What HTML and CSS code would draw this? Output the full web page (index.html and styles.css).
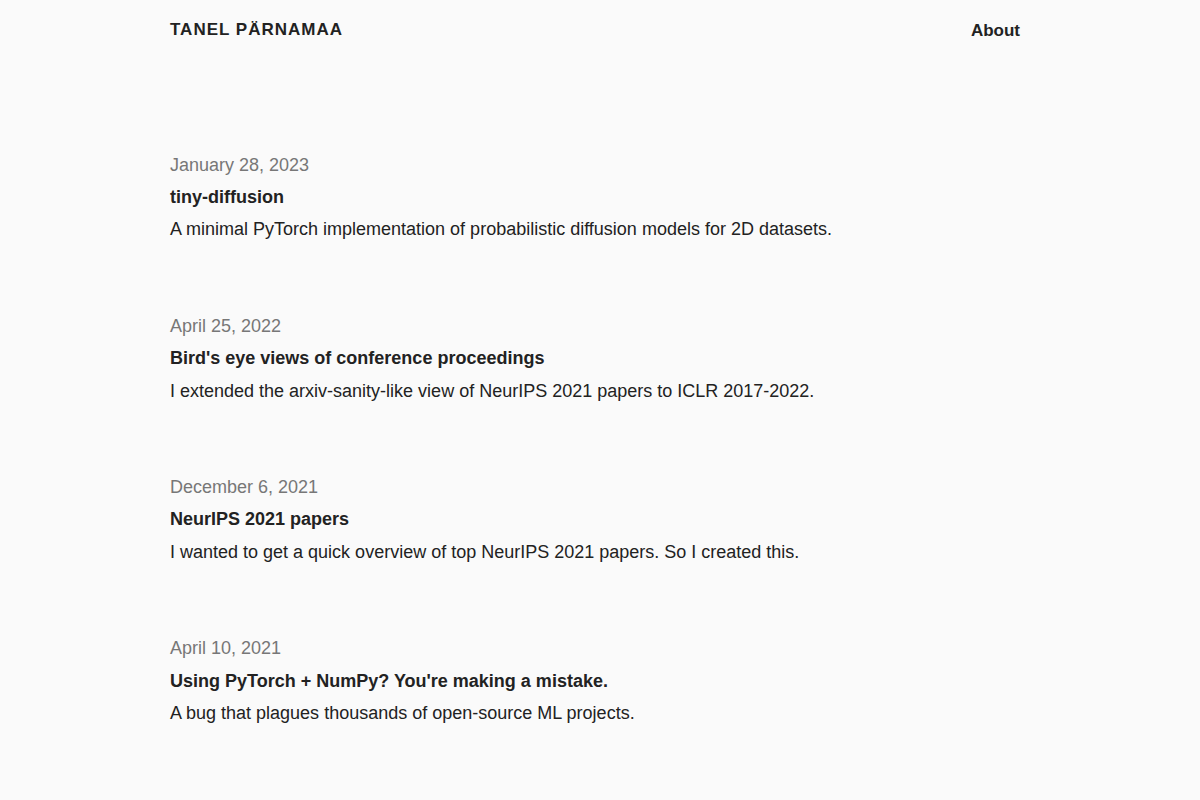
FILE: index.html
```html
<!DOCTYPE html>
<html lang="en">
<head>
  <meta charset="UTF-8">
  <meta name="viewport" content="width=device-width, initial-scale=1.0">
  <title>Tanel Pärnamaa</title>
  <link rel="stylesheet" href="styles.css">
</head>
<body>
  <div class="container">
    <header class="site-header">
      <a class="site-title" href="#">TANEL PÄRNAMAA</a>
      <nav class="site-nav">
        <a href="#">About</a>
      </nav>
    </header>

    <main class="post-list">
      <article class="post">
        <div class="post-date">January 28, 2023</div>
        <a class="post-title" href="#">tiny-diffusion</a>
        <p class="post-summary">A minimal PyTorch implementation of probabilistic diffusion models for 2D datasets.</p>
      </article>

      <article class="post">
        <div class="post-date">April 25, 2022</div>
        <a class="post-title" href="#">Bird's eye views of conference proceedings</a>
        <p class="post-summary">I extended the arxiv-sanity-like view of NeurIPS 2021 papers to ICLR 2017-2022.</p>
      </article>

      <article class="post">
        <div class="post-date">December 6, 2021</div>
        <a class="post-title" href="#">NeurIPS 2021 papers</a>
        <p class="post-summary">I wanted to get a quick overview of top NeurIPS 2021 papers. So I created this.</p>
      </article>

      <article class="post">
        <div class="post-date">April 10, 2021</div>
        <a class="post-title" href="#">Using PyTorch + NumPy? You're making a mistake.</a>
        <p class="post-summary">A bug that plagues thousands of open-source ML projects.</p>
      </article>
    </main>
  </div>
</body>
</html>
```

FILE: styles.css
```css
body {
  font-family: 'Liberation Sans', Arial, sans-serif;
  font-size: 18px;
  line-height: 1.8;
  background: #fafafa;
  color: #222;
  margin: 0;
  padding-right: 10px;
}

a {
  color: inherit;
  text-decoration: none;
}

.container {
  width: 850px;
  margin: 0 auto;
}

.site-header {
  display: flex;
  justify-content: space-between;
  align-items: center;
  padding-top: 14px;
}

.site-title {
  font-size: 17px;
  font-weight: bold;
  letter-spacing: 1px;
}

.site-nav a {
  font-size: 17px;
  font-weight: bold;
}

.post-list {
  padding-top: 102px;
}

.post {
  margin-bottom: 64px;
}

.post-date {
  color: #777;
}

.post-title {
  display: block;
  font-weight: bold;
}

.post-summary {
  margin: 0;
}
```
